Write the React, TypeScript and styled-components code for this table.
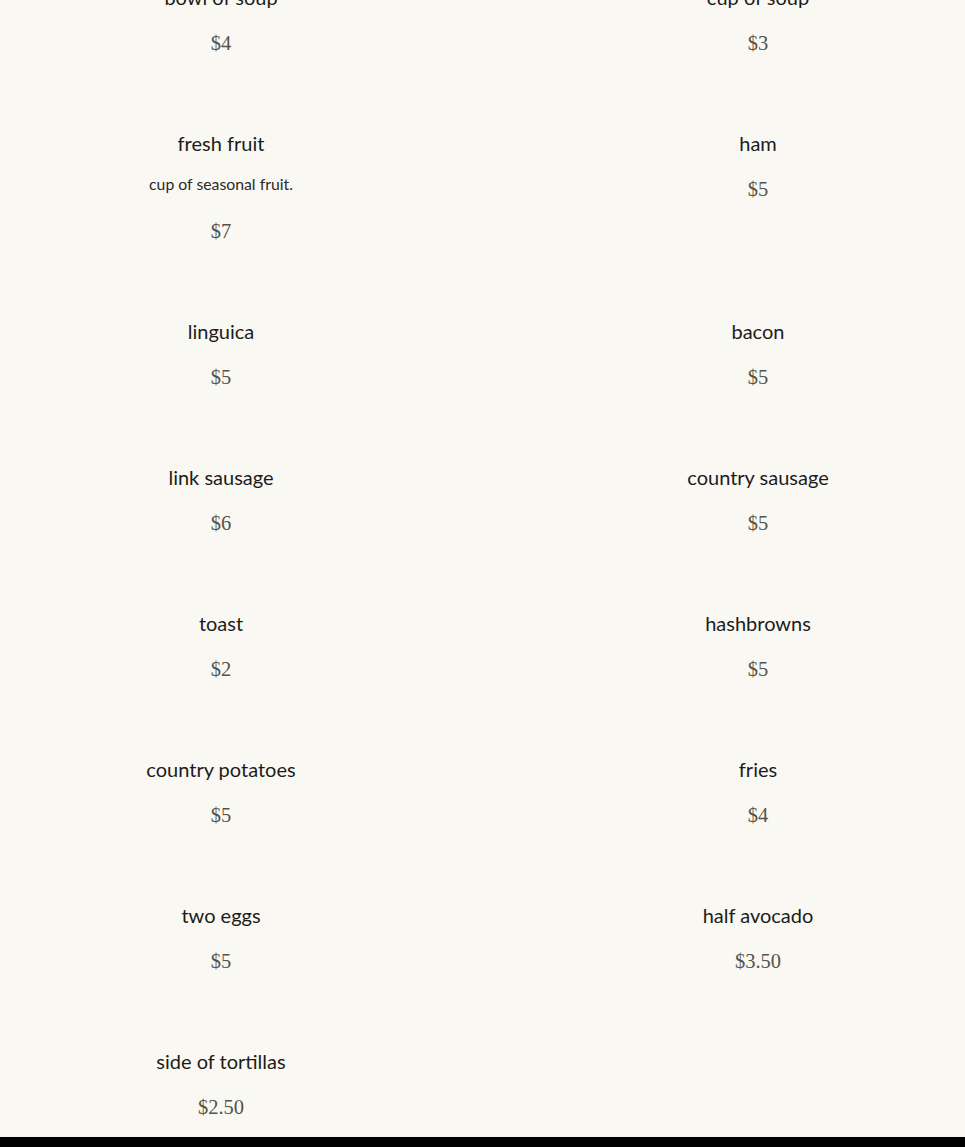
import React from "react";
import styled, { createGlobalStyle } from "styled-components";

const Global = createGlobalStyle`
  html, body { margin: 0; padding: 0; background: #faf8f2; }
  body { overflow: hidden; }
`;

const Page = styled.div`
  min-height: 1147px;
  background: #faf8f2;
  display: flex;
  flex-direction: column;
`;

const Menu = styled.div`
  display: grid;
  grid-template-columns: 442px 414px;
  column-gap: 109px;
  row-gap: 71px;
  align-items: start;
  margin-top: -17px;
  padding-bottom: 15px;
`;

const Item = styled.div`
  display: flex;
  flex-direction: column;
  align-items: center;
  gap: 15px;
  text-align: center;
`;

const Title = styled.div`
  font-family: Lato, "Noto Sans", sans-serif;
  font-size: 20px;
  line-height: 28px;
  padding-bottom: 2px;
  color: #1c1c1c;
`;

const Desc = styled.div`
  font-family: Lato, "Noto Sans", sans-serif;
  font-size: 15.8px;
  line-height: 20px;
  padding-bottom: 2px;
  color: #2a2a2a;
  margin-bottom: 5px;
`;

const Price = styled.div`
  font-family: "Liberation Serif", serif;
  font-size: 20.5px;
  line-height: 30px;
  color: #55534a;
`;

const Footer = styled.div`
  background: #000;
  height: 10px;
  flex: 1;
`;

type MenuItem = { name: string; price: string; desc?: string };

const items: MenuItem[] = [
  { name: "bowl of soup", price: "$4" },
  { name: "cup of soup", price: "$3" },
  { name: "fresh fruit", price: "$7", desc: "cup of seasonal fruit." },
  { name: "ham", price: "$5" },
  { name: "linguica", price: "$5" },
  { name: "bacon", price: "$5" },
  { name: "link sausage", price: "$6" },
  { name: "country sausage", price: "$5" },
  { name: "toast", price: "$2" },
  { name: "hashbrowns", price: "$5" },
  { name: "country potatoes", price: "$5" },
  { name: "fries", price: "$4" },
  { name: "two eggs", price: "$5" },
  { name: "half avocado", price: "$3.50" },
  { name: "side of tortillas", price: "$2.50" },
];

export default function App() {
  return (
    <Page>
      <Global />
      <Menu>
        {items.map((it) => (
          <Item key={it.name}>
            <Title>{it.name}</Title>
            {it.desc && <Desc>{it.desc}</Desc>}
            <Price>{it.price}</Price>
          </Item>
        ))}
      </Menu>
      <Footer />
    </Page>
  );
}
